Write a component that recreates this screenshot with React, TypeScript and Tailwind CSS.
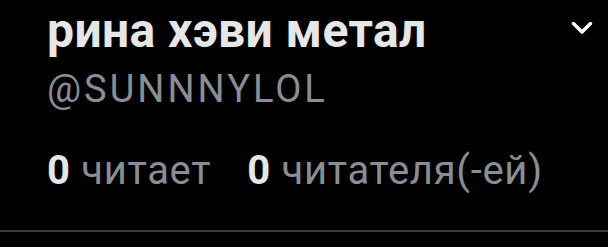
export default function App() {
  return (
    <main className="w-[608px] h-[247px] bg-black overflow-hidden" style={{ fontFamily: 'Roboto, "Noto Sans", sans-serif' }}>
      <div className="relative pl-[47px] pt-[3px]">
        <h1 className="text-[48px] leading-[56px] font-bold tracking-[0.4px] text-[#e6e6e6]">рина хэви метал</h1>
        <div className="mt-[8px] text-[38px] leading-[44px] tracking-[3px] text-[#8a8d91]">@SUNNNYLOL</div>
        <div className="mt-[38px] flex items-baseline gap-[36px] text-[40px] leading-[44px] tracking-[0.7px]">
          <span>
            <span className="font-bold text-[#e6e6e6]">0</span>
            <span className="text-[#8a8d91]"> читает</span>
          </span>
          <span>
            <span className="font-bold text-[#e6e6e6]">0</span>
            <span className="text-[#8a8d91]"> читателя(-ей)</span>
          </span>
        </div>
        <button className="absolute left-[570px] top-[20px] text-white">
          <svg width="24" height="16" viewBox="0 0 24 16" fill="none">
            <path d="M3.5 3.5 L12 12 L20.5 3.5" stroke="currentColor" strokeWidth="3.5" strokeLinecap="round" strokeLinejoin="round" />
          </svg>
        </button>
      </div>
      <div className="mt-[37px] h-[2px] bg-[#3a3a3a]" />
    </main>
  );
}
